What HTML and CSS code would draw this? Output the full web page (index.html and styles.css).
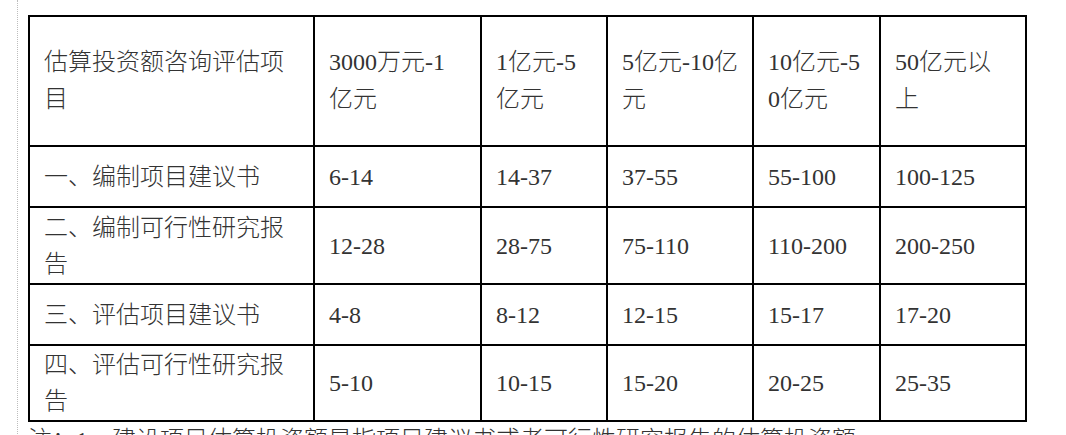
FILE: index.html
```html
<!DOCTYPE html>
<html lang="zh-CN">
<head>
<meta charset="utf-8">
<title>咨询评估收费标准</title>
<link rel="stylesheet" href="styles.css">
</head>
<body>
<div class="page">
  <table class="fees">
    <colgroup>
      <col class="c1"><col class="c2"><col class="c3"><col class="c4"><col class="c5"><col class="c6">
    </colgroup>
    <tr class="head">
      <td>估算投资额咨询评估项<br>目</td>
      <td>3000万元-1<br>亿元</td>
      <td>1亿元-5<br>亿元</td>
      <td>5亿元-10亿<br>元</td>
      <td>10亿元-5<br>0亿元</td>
      <td>50亿元以<br>上</td>
    </tr>
    <tr class="r1">
      <td>一、编制项目建议书</td>
      <td>6-14</td>
      <td>14-37</td>
      <td>37-55</td>
      <td>55-100</td>
      <td>100-125</td>
    </tr>
    <tr class="r2">
      <td>二、编制可行性研究报<br>告</td>
      <td>12-28</td>
      <td>28-75</td>
      <td>75-110</td>
      <td>110-200</td>
      <td>200-250</td>
    </tr>
    <tr class="r3">
      <td>三、评估项目建议书</td>
      <td>4-8</td>
      <td>8-12</td>
      <td>12-15</td>
      <td>15-17</td>
      <td>17-20</td>
    </tr>
    <tr class="r4">
      <td>四、评估可行性研究报<br>告</td>
      <td>5-10</td>
      <td>10-15</td>
      <td>15-20</td>
      <td>20-25</td>
      <td>25-35</td>
    </tr>
  </table>
  <p class="note">注：1、建设项目估算投资额是指项目建议书或者可行性研究报告的估算投资额。</p>
</div>
</body>
</html>
```

FILE: styles.css
```css
html, body {
  margin: 0;
  padding: 0;
  background: #fff;
  height: 435px;
  overflow: hidden;
}

.page {
  margin-left: 17px;
  border-left: 1px dotted #bdbdbd;
  padding: 15px 0 0 10px;
  min-height: 435px;
  box-sizing: border-box;
  font-family: "Liberation Serif", "Noto Sans CJK SC", serif;
  font-size: 24px;
  font-weight: 300;
  line-height: 36px;
  color: #333;
}

.fees {
  border-collapse: collapse;
  table-layout: fixed;
  width: 999px;
}

.fees td {
  border: 2px solid #000;
  padding: 0 12px 0 14px;
  vertical-align: middle;
  white-space: nowrap;
  overflow: hidden;
}

.c1 { width: 285px; }
.c2 { width: 167px; }
.c3 { width: 126px; }
.c4 { width: 146px; }
.c5 { width: 127px; }
.c6 { width: 146px; }

.head { height: 130px; }
.r1 { height: 61px; }
.r2 { height: 77px; }
.r3 { height: 61px; }
.r4 { height: 76px; }

.head td { line-height: 37px; }

.note {
  margin: 0;
  white-space: nowrap;
}
```
